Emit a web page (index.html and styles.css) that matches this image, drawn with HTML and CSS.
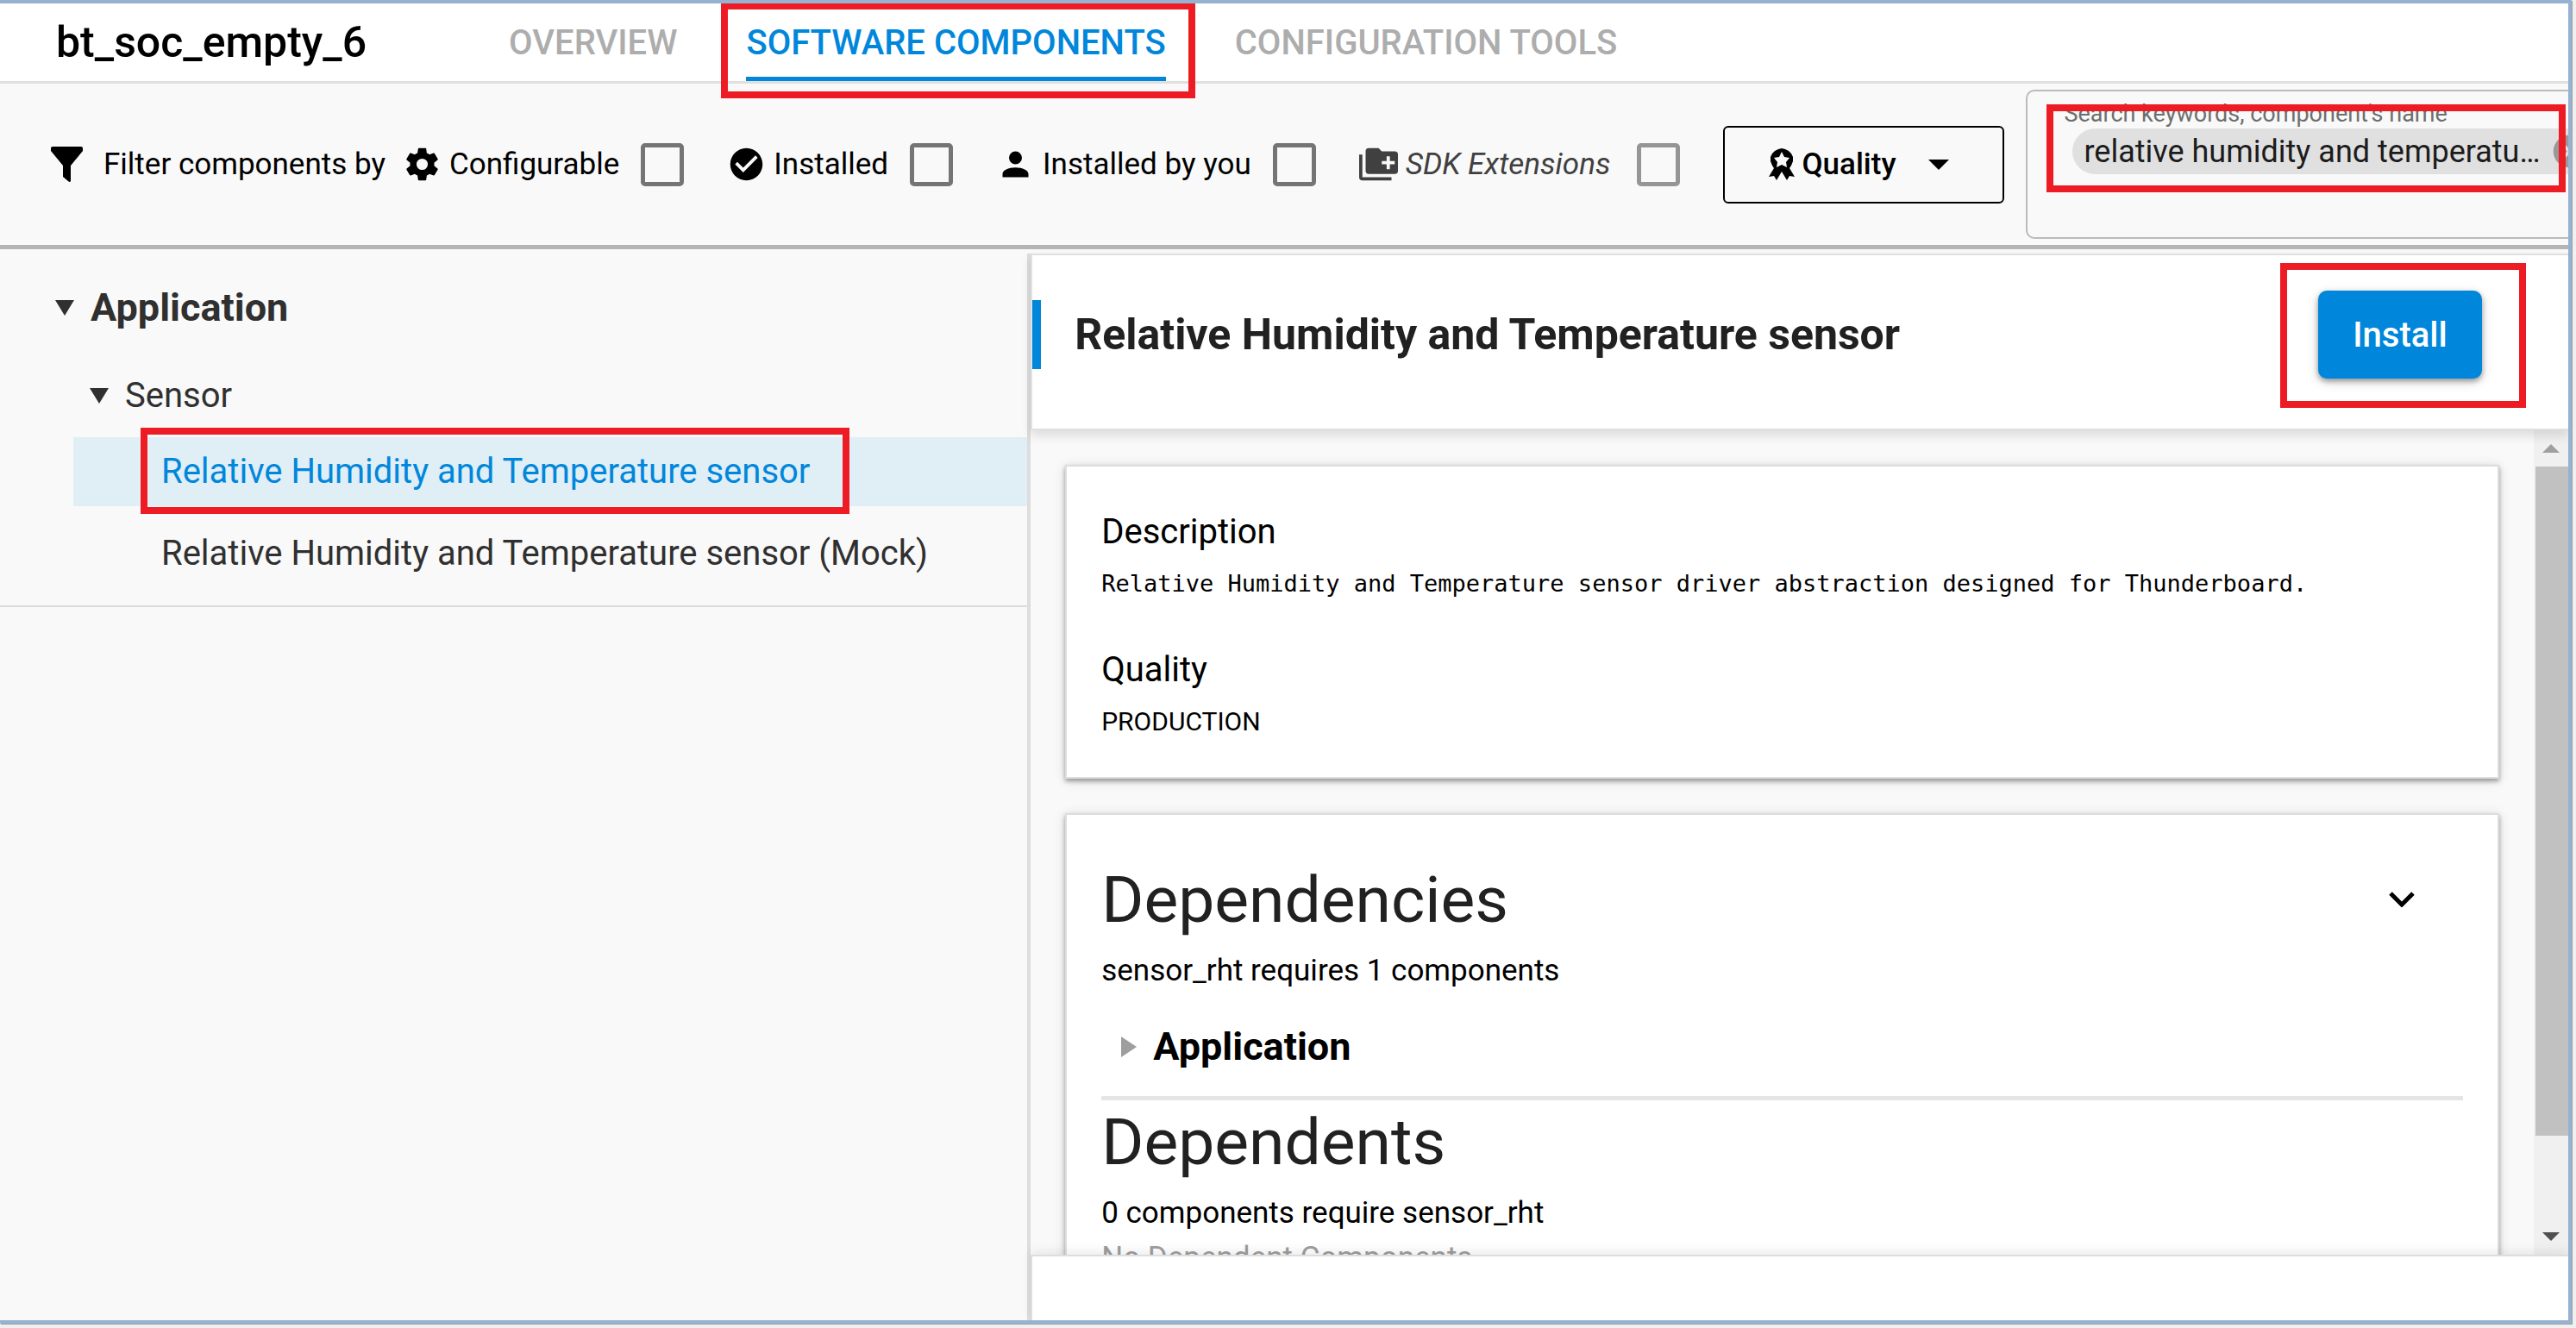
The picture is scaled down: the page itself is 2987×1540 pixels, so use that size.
FILE: index.html
```html
<!DOCTYPE html>
<html lang="en">
<head>
<meta charset="utf-8">
<title>bt_soc_empty_6 - Software Components</title>
<link rel="stylesheet" href="styles.css">
</head>
<body>
<div class="app">
  <header class="topbar">
    <h1 class="project">bt_soc_empty_6</h1>
    <nav class="tabs">
      <a class="tab" href="#overview">OVERVIEW</a>
      <a class="tab tab-active" href="#components">SOFTWARE COMPONENTS<span class="mark mark-tab"></span></a>
      <a class="tab" href="#tools">CONFIGURATION TOOLS</a>
    </nav>
  </header>

  <section class="filters">
    <div class="filter-title">
      <svg class="funnel" viewBox="0 0 37 41"><path d="M2 0H35Q37 0 37 2V5L23 22V40Q22 42 20 40L14 35V22L0 5V2Q0 0 2 0Z"/></svg>
      <span>Filter components by</span>
    </div>
    <label class="filter">
      <svg class="icon" viewBox="0 0 24 24"><path d="M12,15.5A3.5,3.5 0 0,1 8.5,12A3.5,3.5 0 0,1 12,8.5A3.5,3.5 0 0,1 15.5,12A3.5,3.5 0 0,1 12,15.5M19.43,12.97C19.47,12.65 19.5,12.33 19.5,12C19.5,11.67 19.47,11.34 19.43,11L21.54,9.37C21.73,9.22 21.78,8.95 21.66,8.73L19.66,5.27C19.54,5.05 19.27,4.96 19.05,5.05L16.56,6.05C16.04,5.66 15.5,5.32 14.87,5.07L14.5,2.42C14.46,2.18 14.25,2 14,2H10C9.75,2 9.54,2.18 9.5,2.42L9.13,5.07C8.5,5.32 7.96,5.66 7.44,6.05L4.95,5.05C4.73,4.96 4.46,5.05 4.34,5.27L2.34,8.73C2.21,8.95 2.27,9.22 2.46,9.37L4.57,11C4.53,11.34 4.5,11.67 4.5,12C4.5,12.33 4.53,12.65 4.57,12.97L2.46,14.63C2.27,14.78 2.21,15.05 2.34,15.27L4.34,18.73C4.46,18.95 4.73,19.03 4.95,18.95L7.44,17.94C7.96,18.34 8.5,18.68 9.13,18.93L9.5,21.58C9.54,21.82 9.75,22 10,22H14C14.25,22 14.46,21.82 14.5,21.58L14.87,18.93C15.5,18.67 16.04,18.34 16.56,17.94L19.05,18.95C19.27,19.03 19.54,18.95 19.66,18.73L21.66,15.27C21.78,15.05 21.73,14.78 21.54,14.63L19.43,12.97Z"/></svg>
      <span class="filter-name">Configurable</span>
      <input class="check" type="checkbox">
    </label>
    <label class="filter">
      <svg class="icon" viewBox="0 0 24 24"><path d="M12 2C6.5 2 2 6.5 2 12S6.5 22 12 22 22 17.500 22 12 17.500 2 12 2M10 17L5 12L6.410 10.590L10 14.170L17.590 6.580L19 8L10 17Z"/></svg>
      <span class="filter-name">Installed</span>
      <input class="check" type="checkbox">
    </label>
    <label class="filter">
      <svg class="icon" viewBox="0 0 24 24"><path d="M12,4A4,4 0 0,1 16,8A4,4 0 0,1 12,12A4,4 0 0,1 8,8A4,4 0 0,1 12,4M12,14C16.420,14 20,15.790 20,18V20H4V18C4,15.790 7.580,14 12,14Z"/></svg>
      <span class="filter-name">Installed by you</span>
      <input class="check" type="checkbox">
    </label>
    <label class="filter filter-muted">
      <svg class="icon" viewBox="0 0 24 24"><path fill-rule="evenodd" d="M22,4H14L12,2H6A2,2 0 0,0 4,4V16A2,2 0 0,0 6,18H22A2,2 0 0,0 24,16V6A2,2 0 0,0 22,4M22,12H19V15H17V12H14V10H17V7H19V10H22ZM2,6H0V20A2,2 0 0,0 2,22H20V20H2V6Z"/></svg>
      <em class="filter-name">SDK Extensions</em>
      <input class="check" type="checkbox">
    </label>
    <div class="quality">
      <svg class="rosette" viewBox="0 0 30 37"><path fill-rule="evenodd" d="M15 0L19 1L23 3L26 6L28 10V15L26 20L24 23L30 33L24 32L21 37L15 27L9 37L6 32L0 33L6 23L4 20L2 15V10L4 6L7 3L11 1ZM15 4L12 10L6 11L10 16L9 22L15 19L21 22L20 16L24 11L18 10Z"/></svg>
      <select class="quality-select" aria-label="Quality"><option>Quality</option></select>
      <svg class="caret" viewBox="0 0 24 12"><path d="M0 0H24L12 12Z"/></svg>
    </div>
    <div class="search">
      <label class="search-label" for="search">Search keywords, component's name</label>
      <div class="chip">
        <span>relative humidity and temperatu…</span>
        <button class="chip-remove" type="button" aria-label="Remove keyword">
          <svg class="icon" viewBox="0 0 24 24"><path d="M12,2C17.530,2 22,6.470 22,12C22,17.530 17.530,22 12,22C6.470,22 2,17.530 2,12C2,6.470 6.470,2 12,2M15.590,7L12,10.590L8.410,7L7,8.410L10.590,12L7,15.590L8.410,17L12,13.410L15.590,17L17,15.590L13.410,12L17,8.410L15.590,7Z"/></svg>
        </button>
      </div>
      <input class="search-input" id="search" type="text">
      <span class="mark mark-search"></span>
    </div>
  </section>

  <main class="workspace">
    <aside class="sidebar">
      <div class="tree">
        <button class="node node-root" type="button"><svg class="arrow" viewBox="0 0 22 18"><path d="M0 0H22L11 18Z"/></svg>Application</button>
        <button class="node node-group" type="button"><svg class="arrow" viewBox="0 0 22 18"><path d="M0 0H22L11 18Z"/></svg>Sensor</button>
        <a class="leaf leaf-selected" href="#rht"><span class="leaf-name">Relative Humidity and Temperature sensor<span class="mark mark-leaf"></span></span></a>
        <a class="leaf" href="#rht-mock">Relative Humidity and Temperature sensor (Mock)</a>
      </div>
    </aside>

    <section class="detail">
      <header class="detail-head">
        <h2 class="detail-title">Relative Humidity and Temperature sensor</h2>
        <div class="install-wrap">
          <button class="install" type="button">Install</button>
          <span class="mark mark-install"></span>
        </div>
      </header>
      <div class="detail-body">
        <div class="cards">
          <article class="card">
            <h3 class="field">Description</h3>
            <p class="text mono">Relative Humidity and Temperature sensor driver abstraction designed for Thunderboard.</p>
            <h3 class="field field-next">Quality</h3>
            <p class="text small">PRODUCTION</p>
          </article>
          <article class="card">
            <div class="section-head">
              <h3 class="section">Dependencies</h3>
              <button class="collapse" type="button" aria-label="Collapse">
                <svg class="chevron" viewBox="0 0 30 18"><path d="M2 2L15 15L28 2"/></svg>
              </button>
            </div>
            <p class="text">sensor_rht requires 1 components</p>
            <button class="dependency" type="button"><svg class="arrow-right" viewBox="0 0 18 24"><path d="M0 0L18 12L0 24Z"/></svg>Application</button>
            <div class="section-head section-next"><h3 class="section">Dependents</h3></div>
            <p class="text">0 components require sensor_rht</p>
            <p class="text faint">No Dependent Components</p>
          </article>
        </div>
        <div class="scrollbar">
          <svg class="scroll-arrow scroll-up" viewBox="0 0 20 10"><path d="M0 10L10 0L20 10Z"/></svg>
          <div class="scroll-track"><div class="scroll-thumb"></div></div>
          <svg class="scroll-arrow" viewBox="0 0 20 10"><path d="M0 0H20L10 10Z"/></svg>
        </div>
      </div>
      <footer class="detail-foot"></footer>
    </section>
  </main>
</div>
</body>
</html>
```
FILE: styles.css
```css
* { box-sizing: border-box; }

body {
  margin: 0;
  height: 100vh;
  padding: 0 5px 5px 0;
  background: #f0f0f0;
  color: #000;
  font-family: Roboto, "Liberation Sans", sans-serif;
  font-size: 35px;
  overflow: hidden;
}

h1, h2, h3, p { margin: 0; font-weight: 400; }
a { color: inherit; text-decoration: none; }
svg { display: block; flex: none; fill: currentColor; }
button, select, input { font: inherit; color: inherit; border: 0; padding: 0; margin: 0; background: none; }

.app {
  height: 100%;
  display: flex;
  flex-direction: column;
  border: solid #97b2d1;
  border-width: 4px 4px 4px 0;
  box-shadow: 1px 1px 0 #a0a0a0;
  background: #f9f9f9;
  overflow: clip;
}

/* Red call-outs drawn over the controls */
.mark { position: absolute; border: 8px solid #ed1c24; pointer-events: none; }
.mark-tab { inset: -1px -34px -20px -29px; }
.mark-search { left: 22px; top: 15px; width: 602px; height: 102px; }
.mark-leaf { inset: -11px -46px -9px -24px; }
.mark-install { inset: -32px -51px -34px -44px; }

.topbar {
  display: flex;
  flex: none;
  height: 93px;
  padding-left: 65px;
  gap: 165px;
  background: #fff;
  border-bottom: 3px solid #e0e0e0;
}
.project { font-size: 50px; font-weight: 500; line-height: 90px; }
.tabs { display: flex; gap: 80px; font-size: 40px; font-weight: 500; color: #adadad; }
.tab { position: relative; height: 90px; line-height: 91px; }
.tab-active { color: #0087db; box-shadow: inset 0 -5px #0087db; }

.filters {
  display: flex;
  flex: none;
  align-items: center;
  gap: 50px;
  height: 192px;
  padding-left: 59px;
  border-bottom: 5px solid #b4b4b4;
  white-space: nowrap;
  overflow: hidden;
}
.filter-title { display: flex; align-items: center; gap: 24px; margin-right: -30px; }
.funnel { width: 37px; height: 41px; }
.filter { display: flex; align-items: center; flex: none; }
.icon { width: 45px; height: 45px; }
.filter-name { margin: 0 25px 0 9px; }
.check {
  appearance: none;
  width: 50px;
  height: 50px;
  border: 5px solid #757575;
  border-radius: 5px;
}
.filter-muted { color: #404040; }
.filter-muted .filter-name { margin-right: 31px; }
.filter-muted .check { border-color: #959595; }

.quality {
  display: flex;
  align-items: center;
  flex: none;
  width: 326px;
  height: 90px;
  padding: 0 62px 0 51px;
  border: 2px solid #000;
  border-radius: 6px;
}
.rosette { width: 30px; height: 37px; }
.quality-select { appearance: none; flex: 1; margin-left: 8px; font-weight: 500; }
.caret { width: 24px; height: 12px; }

.search {
  position: relative;
  flex: none;
  width: 700px;
  height: 173px;
  margin-left: -25px;
  padding: 9px 0 0 42px;
  border: 2px solid #bbb;
  border-radius: 10px;
}
.search-label { display: block; font-size: 27px; line-height: 34px; color: #6e6e6e; }
.chip {
  display: flex;
  align-items: center;
  gap: 11px;
  width: 620px;
  height: 53px;
  margin-left: 10px;
  padding-left: 13px;
  border-radius: 27px;
  background: #e0e0e0;
  color: #1c1c1c;
  font-size: 36px;
}
.chip-remove { color: #999; }
.search-input { width: 100%; height: 50px; outline: 0; }

.workspace { flex: 1; min-height: 0; display: grid; grid-template-columns: 2fr 3fr; }
.sidebar { color: #303030; }
.tree { display: flex; flex-direction: column; padding: 28px 0 20px; border-bottom: 2px solid #ddd; font-size: 40px; line-height: 80px; }
.node { display: flex; align-items: center; gap: 19px; text-align: left; line-height: 80px; }
.node-root { padding-left: 64px; font-size: 45px; font-weight: 700; }
.node-group { padding-left: 104px; margin: 22px 0 8px; font-size: 40px; }
.arrow { width: 22px; height: 18px; }
.leaf { margin: 0 0 0 85px; padding-left: 102px; }
.leaf + .leaf { margin-top: 15px; }
.leaf-selected { background: #e0eef6; color: #0087db; }
.leaf-name { position: relative; display: inline-block; }

.detail { display: flex; flex-direction: column; min-width: 0; min-height: 0; margin-top: 5px; border-left: 4px solid #ddd; }
.detail-head {
  position: relative;
  z-index: 1;
  display: flex;
  flex: none;
  align-items: center;
  justify-content: space-between;
  padding: 41px 100px 58px 0;
  border: solid #e0e0e0;
  border-width: 2px 0 2px 2px;
  background: #fff;
  box-shadow: 0 6px 12px rgba(0, 0, 0, .12);
}
.detail-title { padding-left: 39px; border-left: 10px solid #0087db; font-size: 50px; font-weight: 700; line-height: 80px; color: #212121; }
.install-wrap { position: relative; }
.install {
  display: block;
  width: 190px;
  height: 102px;
  border-radius: 10px;
  background: #0087db;
  color: #fff;
  font-size: 40px;
  font-weight: 500;
  box-shadow: 0 3px 6px rgba(0, 0, 0, .35), 0 4px 14px rgba(0, 0, 0, .15);
}

.detail-body { flex: 1; min-height: 0; display: flex; overflow: hidden; }
.cards { flex: 1; display: flex; flex-direction: column; gap: 40px; padding: 40px; }
.card {
  flex: none;
  padding: 40px;
  background: #fff;
  border: 2px solid #ddd;
  box-shadow: 0 3px 5px rgba(0, 0, 0, .35), 0 2px 14px rgba(0, 0, 0, .12);
}
.field { font-size: 40px; line-height: 72px; }
.field-next { margin-top: 40px; }
.text { font-size: 35px; line-height: 54px; }
.mono { font: 27px/48px "DejaVu Sans Mono", "Liberation Mono", monospace; }
.small { font-size: 30px; line-height: 48px; }
.faint { line-height: 50px; color: #9e9e9e; }
.section-head { display: flex; align-items: center; justify-content: space-between; margin: 10px 0 8px; }
.section-next { margin-top: 0; }
.section { font-size: 75px; line-height: 96px; color: #212121; }
.collapse { padding: 20px; margin-right: 36px; }
.chevron { width: 30px; height: 18px; fill: none; stroke: #000; stroke-width: 5; }
.dependency {
  display: flex;
  align-items: center;
  gap: 19px;
  width: 100%;
  padding: 31px 0 27px 23px;
  border-bottom: 5px solid #e5e5e5;
  font-size: 45px;
  font-weight: 700;
  line-height: 60px;
}
.arrow-right { width: 18px; height: 24px; color: #9e9e9e; }

.scrollbar { display: flex; flex-direction: column; align-items: center; flex: none; width: 40px; padding: 16px 0; background: #f0f0f0; }
.scroll-arrow { width: 20px; height: 10px; color: #505050; }
.scroll-up { color: #a0a0a0; }
.scroll-track { flex: 1; width: 100%; margin: 16px 0; padding-left: 2px; }
.scroll-thumb { height: 89%; background: #c1c1c1; }

.detail-foot { position: relative; flex: none; height: 76px; border: solid #ddd; border-width: 2px 0 0 2px; background: #fff; box-shadow: 0 -4px 12px rgba(0, 0, 0, .08); }
```
